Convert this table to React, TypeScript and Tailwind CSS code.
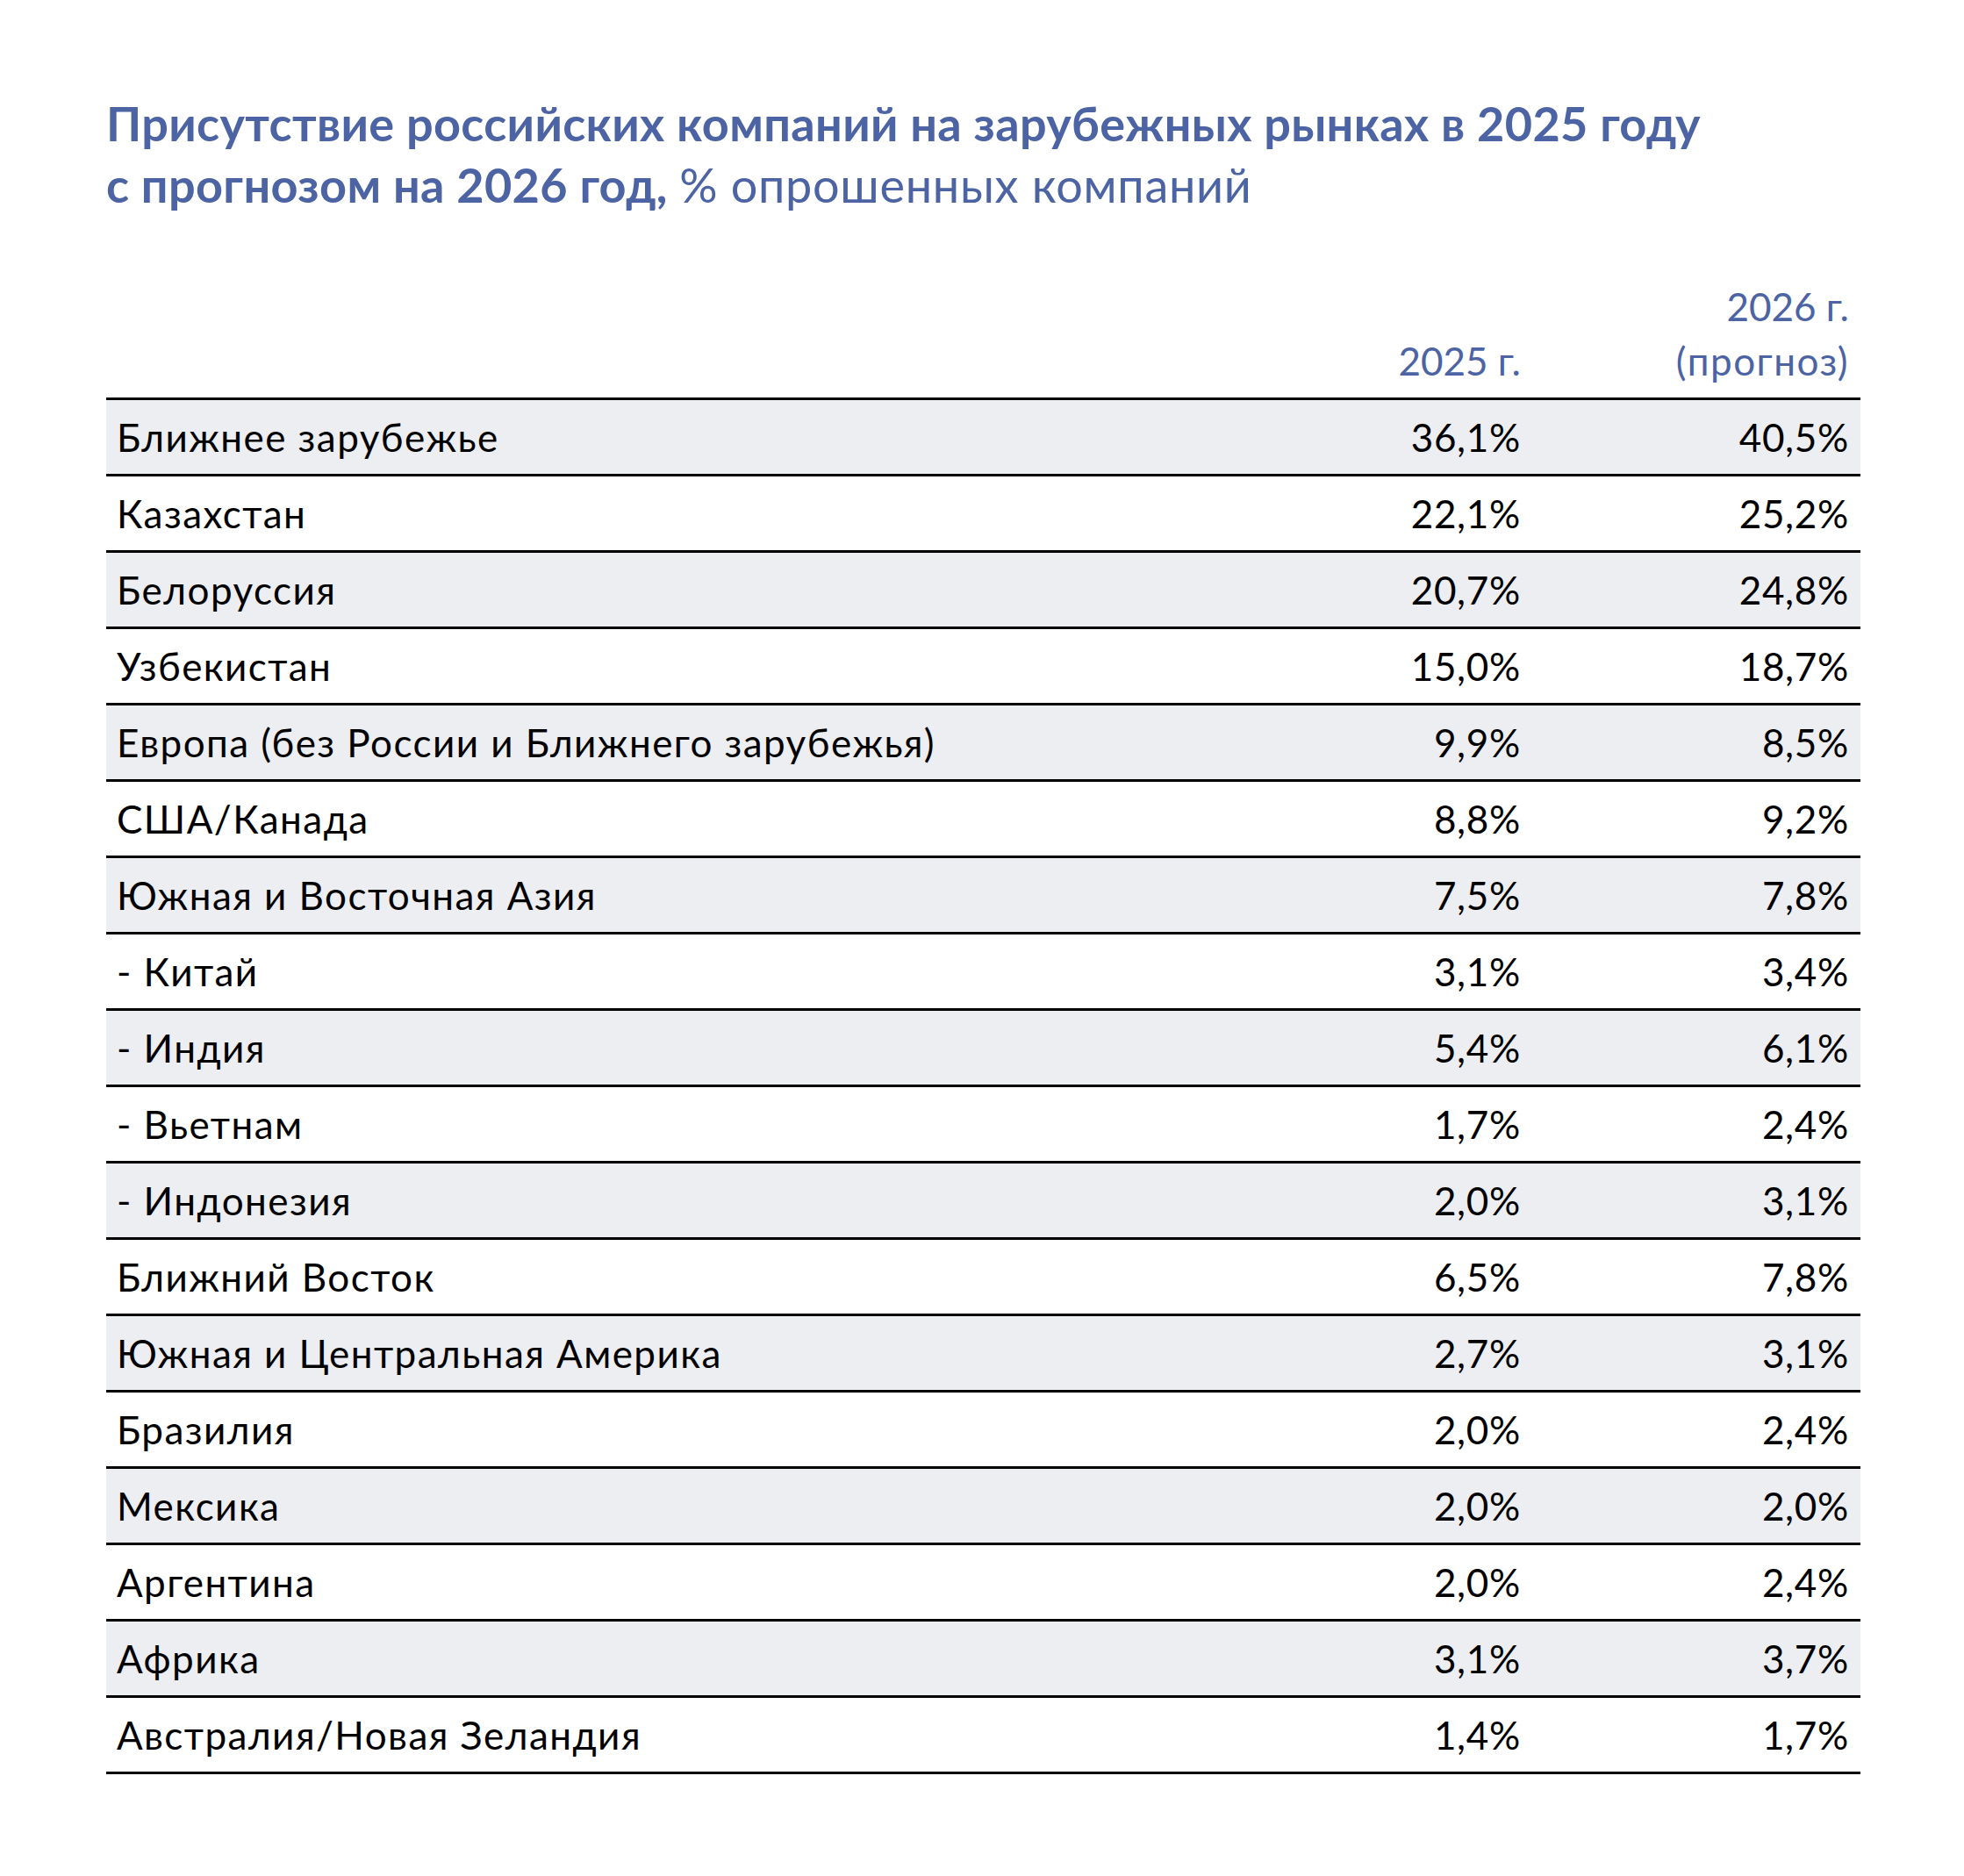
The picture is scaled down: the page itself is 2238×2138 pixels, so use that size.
import React from "react";

const rows: [string, string, string][] = [
  ["Ближнее зарубежье", "36,1%", "40,5%"],
  ["Казахстан", "22,1%", "25,2%"],
  ["Белоруссия", "20,7%", "24,8%"],
  ["Узбекистан", "15,0%", "18,7%"],
  ["Европа (без России и Ближнего зарубежья)", "9,9%", "8,5%"],
  ["США/Канада", "8,8%", "9,2%"],
  ["Южная и Восточная Азия", "7,5%", "7,8%"],
  ["- Китай", "3,1%", "3,4%"],
  ["- Индия", "5,4%", "6,1%"],
  ["- Вьетнам", "1,7%", "2,4%"],
  ["- Индонезия", "2,0%", "3,1%"],
  ["Ближний Восток", "6,5%", "7,8%"],
  ["Южная и Центральная Америка", "2,7%", "3,1%"],
  ["Бразилия", "2,0%", "2,4%"],
  ["Мексика", "2,0%", "2,0%"],
  ["Аргентина", "2,0%", "2,4%"],
  ["Африка", "3,1%", "3,7%"],
  ["Австралия/Новая Зеландия", "1,4%", "1,7%"],
];

export default function App() {
  return (
    <div
      className="w-[2238px] h-[2138px] bg-white pt-[106px] pl-[121px]"
      style={{ fontFamily: "Lato, 'Noto Sans', sans-serif" }}
    >
      <h1 className="text-[54px] leading-[70px] font-bold text-[#4c63a4] whitespace-nowrap tracking-[0.35px]">
        Присутствие российских компаний на зарубежных рынках в 2025 году
        <br />с прогнозом на 2026 год,{" "}
        <span className="font-normal tracking-[0.7px]">% опрошенных компаний</span>
      </h1>

      <div className="w-[1999px]">
        <div className="mt-[72px] mb-[11px] grid grid-cols-[1fr_374px_374px] items-end text-[44px] leading-[62px] text-[#4c63a4]">
          <div />
          <div className="text-right pr-[13px]">2025 г.</div>
          <div className="text-right pr-[13px]">
            2026 г.
            <br />
            <span className="tracking-[1.5px]">(прогноз)</span>
          </div>
        </div>

        <div className="border-b-[3px] border-black">
          {rows.map(([name, a, b], i) => (
            <div
              key={name}
              className={
                "grid grid-cols-[1fr_374px_374px] items-center h-[87px] border-t-[3px] border-black text-[44px] text-black " +
                (i % 2 === 0 ? "bg-[#edeef2]" : "bg-white")
              }
            >
              <div className="pl-[12px] tracking-[1.45px]">{name}</div>
              <div className="text-right pr-[13px] tracking-[0.7px]">{a}</div>
              <div className="text-right pr-[13px] tracking-[0.7px]">{b}</div>
            </div>
          ))}
        </div>
      </div>
    </div>
  );
}
